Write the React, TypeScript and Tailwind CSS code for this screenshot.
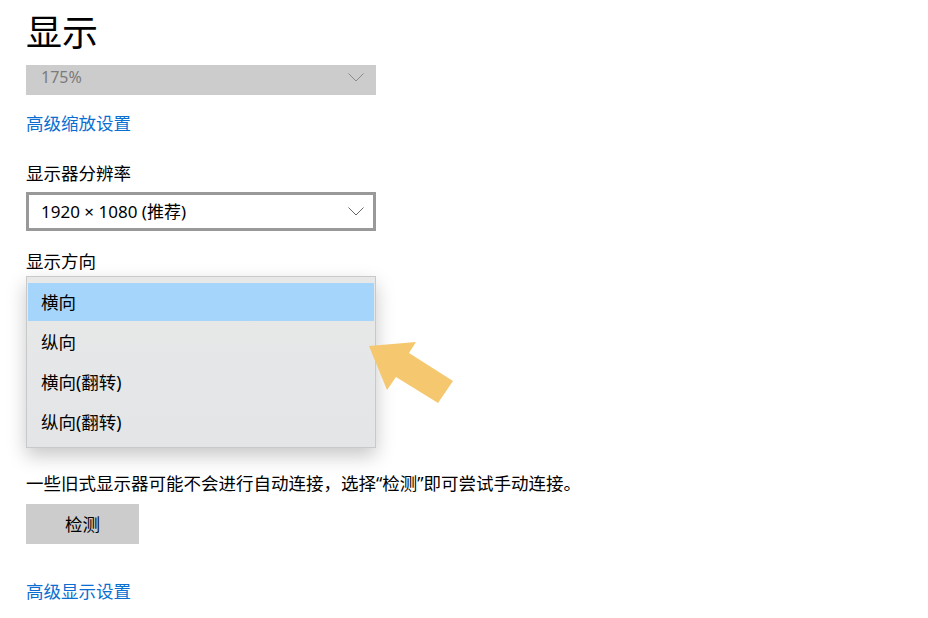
import React from "react";

const font = { fontFamily: '"Noto Sans", "Noto Sans CJK SC", sans-serif' };

const Chevron = ({ color }: { color: string }) => (
  <svg width="16" height="9" viewBox="0 0 16 9" fill="none">
    <polyline points="0.5,0.5 8,8 15.5,0.5" stroke={color} strokeWidth="1" />
  </svg>
);

const orientations = ["横向", "纵向", "横向(翻转)", "纵向(翻转)"];

export default function App() {
  return (
    <div className="relative h-[618px] w-[928px] overflow-hidden bg-white text-black" style={font}>
      <div className="flex flex-col px-[26px]">
        {/* page title */}
        <h1 className="h-[65px] text-[36px] leading-[65px] font-normal">显示</h1>

        {/* scale dropdown (disabled, scrolled partly out of view) */}
        <div className="flex h-[30px] w-[350px] items-center justify-between bg-[#cccccc] pb-[6px] pl-[15px] pr-[12px]">
          <span className="text-[16px] leading-none text-[#7b7b7b]">175%</span>
          <Chevron color="#8a8a8a" />
        </div>

        <a className="mt-[18px] h-[20px] text-[17.5px] leading-[20px] text-[#0a6fd1]">高级缩放设置</a>

        <div className="mt-[30px] h-[20px] text-[17.5px] leading-[20px]">显示器分辨率</div>

        <div className="mt-[9px] flex h-[39px] w-[350px] items-center justify-between border-[3px] border-[#999999] pl-[12px] pr-[9px]">
          <span className="text-[17px] leading-none">1920 × 1080 (推荐)</span>
          <Chevron color="#666666" />
        </div>

        <div className="mt-[20px] h-[20px] text-[17.5px] leading-[20px]">显示方向</div>

        <p className="mt-[202px] h-[20px] text-[17.5px] leading-[20px]">
          一些旧式显示器可能不会进行自动连接，选择“检测”即可尝试手动连接。
        </p>

        <button className="mt-[11px] h-[40px] w-[113px] bg-[#cccccc] text-[17.5px] text-black">检测</button>

        <a className="mt-[37px] h-[20px] text-[17.5px] leading-[20px] text-[#0a6fd1]">高级显示设置</a>
      </div>

      {/* open orientation list */}
      <div className="absolute left-[26px] top-[276px] h-[172px] w-[350px] border border-[#c9c9c9] bg-gradient-to-b from-[#e8e8e8] to-[#e3e5e7] px-px pt-[6px] shadow-[0_8px_18px_rgba(0,0,0,0.22)]">
        {orientations.map((o, i) => (
          <div
            key={o}
            className={`flex items-center pl-[13px] text-[17.5px] ${
              i === 0 ? "h-[38px] bg-[#a6d5fc]" : "h-[40px]"
            } ${i === 1 ? "mt-px" : ""}`}
          >
            {o}
          </div>
        ))}
      </div>

      {/* pointer arrow */}
      <svg className="absolute left-0 top-0" width="928" height="618" viewBox="0 0 928 618">
        <polygon
          points="369,346 416,342 409,353 453,381 438,403 396,377 387,390"
          fill="#f5c86f"
        />
      </svg>
    </div>
  );
}
